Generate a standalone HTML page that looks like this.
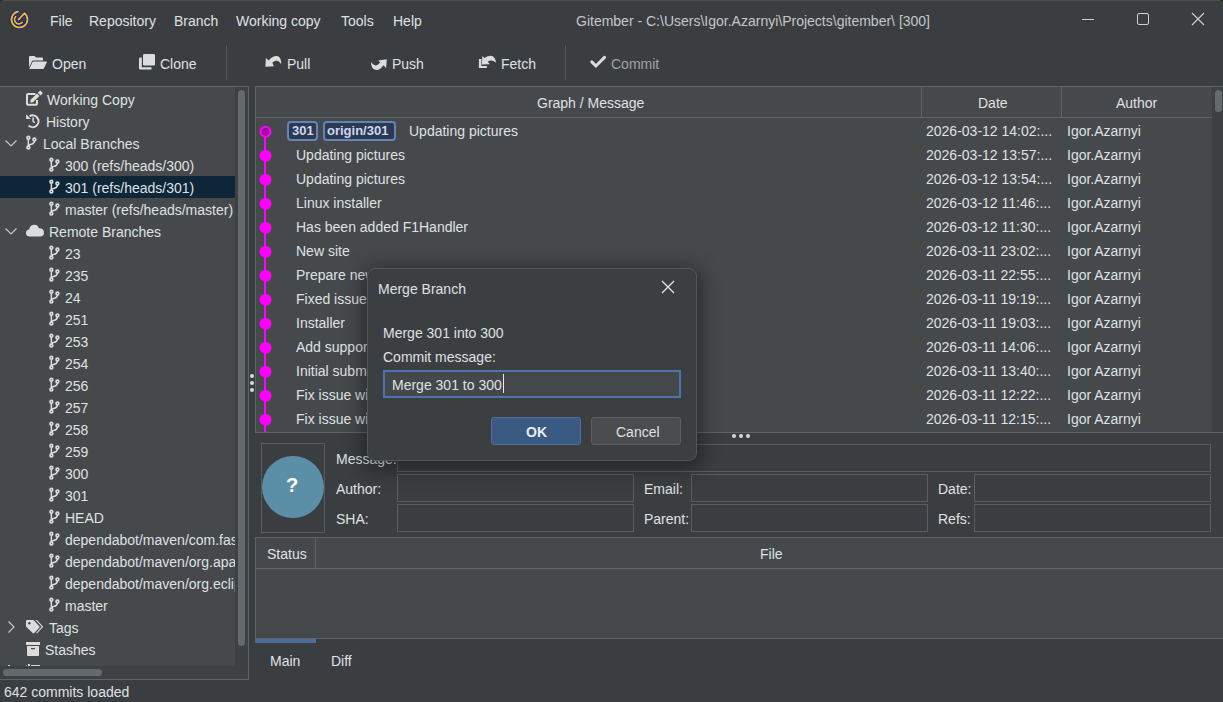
<!DOCTYPE html>
<html><head><meta charset="utf-8"><style>
html,body{margin:0;padding:0;}
body{width:1223px;height:702px;overflow:hidden;position:relative;background:#3b3e41;font-family:"Liberation Sans",sans-serif;font-size:14px;color:#dfe1e3;}
.t{position:absolute;white-space:nowrap;line-height:16px;}
.b{position:absolute;box-sizing:border-box;}
svg{position:absolute;overflow:visible;}
</style></head><body>

<div class="b" style="left:0px;top:0px;width:1223px;height:1px;background:#4b5149;"></div>
<div class="b" style="left:0px;top:0px;width:3px;height:1px;background:#26331f;"></div>
<div class="b" style="left:0px;top:1px;width:1px;height:2px;background:#2f3a2b;"></div>
<div class="b" style="left:1220px;top:0px;width:3px;height:1px;background:#26331f;"></div>
<div class="b" style="left:1222px;top:1px;width:1px;height:2px;background:#2f3a2b;"></div>
<svg style="left:6px;top:6px" width="26" height="26" viewBox="0 0 26 26">
<g fill="none" stroke-linecap="round" stroke-linejoin="round">
<path d="M11.9 5.6 A8 8 0 1 0 18.5 7.2 L12.6 13.6 M9.6 10.7 A4.35 4.35 0 0 0 16.3 16.3" stroke="#1a1ab0" stroke-width="3.4"/>
<path d="M11.9 5.6 A8 8 0 1 0 18.5 7.2 L12.6 13.6 M9.6 10.7 A4.35 4.35 0 0 0 16.3 16.3" stroke="#f7c600" stroke-width="1.7"/>
</g></svg>
<div class="t" style="left:50px;top:13px;">File</div>
<div class="t" style="left:89px;top:13px;">Repository</div>
<div class="t" style="left:174px;top:13px;">Branch</div>
<div class="t" style="left:236px;top:13px;">Working copy</div>
<div class="t" style="left:341px;top:13px;">Tools</div>
<div class="t" style="left:393px;top:13px;">Help</div>
<div class="t" style="left:576px;top:13px;color:#c4c6c8;">Gitember - C:\Users\Igor.Azarnyi\Projects\gitember\ [300]</div>
<div class="b" style="left:1082px;top:19px;width:12px;height:1px;background:#cfd1d3;"></div>
<div class="b" style="left:1137px;top:13px;width:12px;height:12px;border:1px solid #cfd1d3;border-radius:2px;"></div>
<svg style="left:1192px;top:13px" width="12" height="12"><path d="M0 0L12 12M12 0L0 12" stroke="#cfd1d3" stroke-width="1.1"/></svg>
<svg style="left:29px;top:56px" width="18" height="13" viewBox="0 0 18 13">
<path d="M0 1.2 Q0 0 1.2 0 H5.5 L7 1.6 H13 Q14 1.6 14 2.6 V4.5 H4.2 Q3.4 4.5 3 5.3 L0 11.5 Z" fill="#dcdcdc"/>
<path d="M4.3 5.6 H17.6 Q18 5.6 17.8 6.2 L15 12.3 Q14.7 13 14 13 H0.8 Q0.3 13 0.5 12.5 L3.5 6.1 Q3.8 5.6 4.3 5.6Z" fill="#dcdcdc"/>
</svg>
<div class="t" style="left:52px;top:56px;">Open</div>
<svg style="left:139px;top:54px" width="16" height="16" viewBox="0 0 16 16">
<rect x="4" y="0" width="12" height="11.5" rx="1.3" fill="#dcdcdc"/>
<path d="M2.8 3.5 V13.2 H12.5 V15.5 H1.3 Q0 15.5 0 14.2 V4.8 Q0 3.5 1.3 3.5 Z" fill="#dcdcdc"/>
</svg>
<div class="t" style="left:160px;top:56px;">Clone</div>
<div class="b" style="left:226px;top:45px;width:1px;height:35px;background:#55585b;"></div>
<svg style="left:260px;top:50px" width="30" height="25" viewBox="0 0 30 25">
<path d="M5.9 7.9 L8.7 10.5 Q12 5.9 16.5 5.9 Q21.3 6.1 21.2 13.9 Q19 10.4 16.5 10.4 Q14.2 10.5 12.3 12.8 L13.9 16.3 L5.4 16.8 Z" fill="#dcdcdc"/>
</svg>
<div class="t" style="left:287px;top:56px;">Pull</div>
<svg style="left:365px;top:50px" width="30" height="25" viewBox="0 0 30 25">
<path d="M13.2 10.4 L21.8 9.2 L21.1 17.9 L18.4 15.3 Q15.5 20 11.3 20 Q6.2 19.8 5.9 12.1 Q8 15.4 10.5 15.4 Q12.8 15.3 15.2 12.4 Z" fill="#dcdcdc"/>
</svg>
<div class="t" style="left:392px;top:56px;">Push</div>
<svg style="left:473px;top:50px" width="30" height="25" viewBox="0 0 30 25">
<path d="M9.3 6.1 L11.5 8 Q14.5 5.7 17.5 5.7 Q22.5 6 22.9 12.7 Q20.5 10.4 18 10.4 Q16 10.4 14.8 11.8 L16.8 14.3 L9 14.6 Z" fill="#dcdcdc"/>
<path d="M5.9 8.9 H8.4 V16 H13.9 V17.9 H5.9 Z" fill="#dcdcdc"/>
</svg>
<div class="t" style="left:501px;top:56px;">Fetch</div>
<div class="b" style="left:565px;top:45px;width:1px;height:35px;background:#55585b;"></div>
<svg style="left:585px;top:50px" width="30" height="25" viewBox="0 0 30 25">
<path d="M6.8 11.9 L10.9 16 L19.5 7.4" fill="none" stroke="#dcdcdc" stroke-width="3" stroke-linecap="round"/>
</svg>
<div class="t" style="left:611px;top:56px;color:#a0a3a6;">Commit</div>
<div class="b" style="left:0px;top:86px;width:249px;height:594px;border:1px solid #606366;border-left:none;background:#45494b;"></div>
<div class="b" style="left:235px;top:87px;width:13px;height:579px;background:#3e4144;"></div>
<div class="b" style="left:0px;top:666px;width:248px;height:13px;background:#3e4144;"></div>
<div class="b" style="left:238px;top:90px;width:7px;height:556px;background:#646b6e;border-radius:4px;"></div>
<div class="b" style="left:3px;top:669px;width:99px;height:7px;background:#646b6e;border-radius:4px;"></div>
<div class="b" style="left:0px;top:176px;width:235px;height:22px;background:#0e2638;"></div>
<div class="b" style="left:0;top:87px;width:235px;height:579px;overflow:hidden;">
<svg style="left:22px;top:1px" width="24" height="20" viewBox="0 0 24 20">
<path d="M13.4 5.9 H6 Q5 5.9 5 6.9 V15.8 Q5 16.8 6 16.8 H14 Q15 16.8 15 15.8 V12" fill="none" stroke="#dcdcdc" stroke-width="2"/>
<path d="M8.3 14.6 L8.56 11.86 L15.0 5.4 L17.5 7.9 L11.04 14.34 Z" fill="#dcdcdc"/>
<path d="M15.7 4.8 L17.6 2.9 Q18.2 2.3 18.8 2.9 L20.4 4.5 Q21 5.1 20.4 5.7 L18.5 7.6 Z" fill="#dcdcdc"/>
</svg>
<div class="t" style="left:47px;top:5px;">Working Copy</div>
<svg style="left:22px;top:23px" width="24" height="20" viewBox="0 0 24 20">
<path d="M6.6 15.6 A5.9 5.9 0 1 0 7.6 6.2" fill="none" stroke="#dcdcdc" stroke-width="2"/>
<path d="M4.1 4.3 L4.1 9.1 L8.9 9.1 Z" fill="#dcdcdc"/>
<path d="M11.1 7.6 V11.2 L12.6 12.8" fill="none" stroke="#dcdcdc" stroke-width="1.5"/>
</svg>
<div class="t" style="left:46px;top:27px;">History</div>
<svg style="left:5px;top:53px" width="12" height="7"><path d="M0.5 0.5 L6 6 L11.5 0.5" fill="none" stroke="#c9cbcd" stroke-width="1.1"/></svg>
<svg style="left:26px;top:49px" width="12" height="15" viewBox="0 0 12 15">
<g fill="none" stroke="#dcdcdc" stroke-width="1.5">
<circle cx="2.35" cy="1.75" r="1.4" stroke-width="1.7"/>
<circle cx="2.35" cy="11.5" r="1.4" stroke-width="1.7"/>
<circle cx="8.4" cy="3.45" r="1.4" stroke-width="1.7"/>
<path d="M2.35 3.1 V10.1 M8.4 4.8 Q8.4 7.8 4.5 8.6 Q2.6 9 2.35 10.1"/>
</g></svg>
<div class="t" style="left:43px;top:49px;">Local Branches</div>
<svg style="left:49px;top:71px" width="12" height="15" viewBox="0 0 12 15">
<g fill="none" stroke="#dcdcdc" stroke-width="1.5">
<circle cx="2.35" cy="1.75" r="1.4" stroke-width="1.7"/>
<circle cx="2.35" cy="11.5" r="1.4" stroke-width="1.7"/>
<circle cx="8.4" cy="3.45" r="1.4" stroke-width="1.7"/>
<path d="M2.35 3.1 V10.1 M8.4 4.8 Q8.4 7.8 4.5 8.6 Q2.6 9 2.35 10.1"/>
</g></svg>
<div class="t" style="left:65px;top:71px;">300 (refs/heads/300)</div>
<svg style="left:49px;top:93px" width="12" height="15" viewBox="0 0 12 15">
<g fill="none" stroke="#dcdcdc" stroke-width="1.5">
<circle cx="2.35" cy="1.75" r="1.4" stroke-width="1.7"/>
<circle cx="2.35" cy="11.5" r="1.4" stroke-width="1.7"/>
<circle cx="8.4" cy="3.45" r="1.4" stroke-width="1.7"/>
<path d="M2.35 3.1 V10.1 M8.4 4.8 Q8.4 7.8 4.5 8.6 Q2.6 9 2.35 10.1"/>
</g></svg>
<div class="t" style="left:65px;top:93px;">301 (refs/heads/301)</div>
<svg style="left:49px;top:115px" width="12" height="15" viewBox="0 0 12 15">
<g fill="none" stroke="#dcdcdc" stroke-width="1.5">
<circle cx="2.35" cy="1.75" r="1.4" stroke-width="1.7"/>
<circle cx="2.35" cy="11.5" r="1.4" stroke-width="1.7"/>
<circle cx="8.4" cy="3.45" r="1.4" stroke-width="1.7"/>
<path d="M2.35 3.1 V10.1 M8.4 4.8 Q8.4 7.8 4.5 8.6 Q2.6 9 2.35 10.1"/>
</g></svg>
<div class="t" style="left:65px;top:115px;">master (refs/heads/master)</div>
<svg style="left:5px;top:141px" width="12" height="7"><path d="M0.5 0.5 L6 6 L11.5 0.5" fill="none" stroke="#c9cbcd" stroke-width="1.1"/></svg>
<svg style="left:26px;top:137px" width="18" height="13" viewBox="0 0 18 13">
<path d="M4 12.5 Q0 12.5 0 9 Q0 6 3.2 5.6 Q3.6 1.5 7.8 0.8 Q11.6 0.5 13 4.2 Q17.8 4.3 18 8.5 Q18 12.5 14 12.5 Z" fill="#dcdcdc"/>
</svg>
<div class="t" style="left:49px;top:137px;">Remote Branches</div>
<svg style="left:49px;top:159px" width="12" height="15" viewBox="0 0 12 15">
<g fill="none" stroke="#dcdcdc" stroke-width="1.5">
<circle cx="2.35" cy="1.75" r="1.4" stroke-width="1.7"/>
<circle cx="2.35" cy="11.5" r="1.4" stroke-width="1.7"/>
<circle cx="8.4" cy="3.45" r="1.4" stroke-width="1.7"/>
<path d="M2.35 3.1 V10.1 M8.4 4.8 Q8.4 7.8 4.5 8.6 Q2.6 9 2.35 10.1"/>
</g></svg>
<div class="t" style="left:65px;top:159px;">23</div>
<svg style="left:49px;top:181px" width="12" height="15" viewBox="0 0 12 15">
<g fill="none" stroke="#dcdcdc" stroke-width="1.5">
<circle cx="2.35" cy="1.75" r="1.4" stroke-width="1.7"/>
<circle cx="2.35" cy="11.5" r="1.4" stroke-width="1.7"/>
<circle cx="8.4" cy="3.45" r="1.4" stroke-width="1.7"/>
<path d="M2.35 3.1 V10.1 M8.4 4.8 Q8.4 7.8 4.5 8.6 Q2.6 9 2.35 10.1"/>
</g></svg>
<div class="t" style="left:65px;top:181px;">235</div>
<svg style="left:49px;top:203px" width="12" height="15" viewBox="0 0 12 15">
<g fill="none" stroke="#dcdcdc" stroke-width="1.5">
<circle cx="2.35" cy="1.75" r="1.4" stroke-width="1.7"/>
<circle cx="2.35" cy="11.5" r="1.4" stroke-width="1.7"/>
<circle cx="8.4" cy="3.45" r="1.4" stroke-width="1.7"/>
<path d="M2.35 3.1 V10.1 M8.4 4.8 Q8.4 7.8 4.5 8.6 Q2.6 9 2.35 10.1"/>
</g></svg>
<div class="t" style="left:65px;top:203px;">24</div>
<svg style="left:49px;top:225px" width="12" height="15" viewBox="0 0 12 15">
<g fill="none" stroke="#dcdcdc" stroke-width="1.5">
<circle cx="2.35" cy="1.75" r="1.4" stroke-width="1.7"/>
<circle cx="2.35" cy="11.5" r="1.4" stroke-width="1.7"/>
<circle cx="8.4" cy="3.45" r="1.4" stroke-width="1.7"/>
<path d="M2.35 3.1 V10.1 M8.4 4.8 Q8.4 7.8 4.5 8.6 Q2.6 9 2.35 10.1"/>
</g></svg>
<div class="t" style="left:65px;top:225px;">251</div>
<svg style="left:49px;top:247px" width="12" height="15" viewBox="0 0 12 15">
<g fill="none" stroke="#dcdcdc" stroke-width="1.5">
<circle cx="2.35" cy="1.75" r="1.4" stroke-width="1.7"/>
<circle cx="2.35" cy="11.5" r="1.4" stroke-width="1.7"/>
<circle cx="8.4" cy="3.45" r="1.4" stroke-width="1.7"/>
<path d="M2.35 3.1 V10.1 M8.4 4.8 Q8.4 7.8 4.5 8.6 Q2.6 9 2.35 10.1"/>
</g></svg>
<div class="t" style="left:65px;top:247px;">253</div>
<svg style="left:49px;top:269px" width="12" height="15" viewBox="0 0 12 15">
<g fill="none" stroke="#dcdcdc" stroke-width="1.5">
<circle cx="2.35" cy="1.75" r="1.4" stroke-width="1.7"/>
<circle cx="2.35" cy="11.5" r="1.4" stroke-width="1.7"/>
<circle cx="8.4" cy="3.45" r="1.4" stroke-width="1.7"/>
<path d="M2.35 3.1 V10.1 M8.4 4.8 Q8.4 7.8 4.5 8.6 Q2.6 9 2.35 10.1"/>
</g></svg>
<div class="t" style="left:65px;top:269px;">254</div>
<svg style="left:49px;top:291px" width="12" height="15" viewBox="0 0 12 15">
<g fill="none" stroke="#dcdcdc" stroke-width="1.5">
<circle cx="2.35" cy="1.75" r="1.4" stroke-width="1.7"/>
<circle cx="2.35" cy="11.5" r="1.4" stroke-width="1.7"/>
<circle cx="8.4" cy="3.45" r="1.4" stroke-width="1.7"/>
<path d="M2.35 3.1 V10.1 M8.4 4.8 Q8.4 7.8 4.5 8.6 Q2.6 9 2.35 10.1"/>
</g></svg>
<div class="t" style="left:65px;top:291px;">256</div>
<svg style="left:49px;top:313px" width="12" height="15" viewBox="0 0 12 15">
<g fill="none" stroke="#dcdcdc" stroke-width="1.5">
<circle cx="2.35" cy="1.75" r="1.4" stroke-width="1.7"/>
<circle cx="2.35" cy="11.5" r="1.4" stroke-width="1.7"/>
<circle cx="8.4" cy="3.45" r="1.4" stroke-width="1.7"/>
<path d="M2.35 3.1 V10.1 M8.4 4.8 Q8.4 7.8 4.5 8.6 Q2.6 9 2.35 10.1"/>
</g></svg>
<div class="t" style="left:65px;top:313px;">257</div>
<svg style="left:49px;top:335px" width="12" height="15" viewBox="0 0 12 15">
<g fill="none" stroke="#dcdcdc" stroke-width="1.5">
<circle cx="2.35" cy="1.75" r="1.4" stroke-width="1.7"/>
<circle cx="2.35" cy="11.5" r="1.4" stroke-width="1.7"/>
<circle cx="8.4" cy="3.45" r="1.4" stroke-width="1.7"/>
<path d="M2.35 3.1 V10.1 M8.4 4.8 Q8.4 7.8 4.5 8.6 Q2.6 9 2.35 10.1"/>
</g></svg>
<div class="t" style="left:65px;top:335px;">258</div>
<svg style="left:49px;top:357px" width="12" height="15" viewBox="0 0 12 15">
<g fill="none" stroke="#dcdcdc" stroke-width="1.5">
<circle cx="2.35" cy="1.75" r="1.4" stroke-width="1.7"/>
<circle cx="2.35" cy="11.5" r="1.4" stroke-width="1.7"/>
<circle cx="8.4" cy="3.45" r="1.4" stroke-width="1.7"/>
<path d="M2.35 3.1 V10.1 M8.4 4.8 Q8.4 7.8 4.5 8.6 Q2.6 9 2.35 10.1"/>
</g></svg>
<div class="t" style="left:65px;top:357px;">259</div>
<svg style="left:49px;top:379px" width="12" height="15" viewBox="0 0 12 15">
<g fill="none" stroke="#dcdcdc" stroke-width="1.5">
<circle cx="2.35" cy="1.75" r="1.4" stroke-width="1.7"/>
<circle cx="2.35" cy="11.5" r="1.4" stroke-width="1.7"/>
<circle cx="8.4" cy="3.45" r="1.4" stroke-width="1.7"/>
<path d="M2.35 3.1 V10.1 M8.4 4.8 Q8.4 7.8 4.5 8.6 Q2.6 9 2.35 10.1"/>
</g></svg>
<div class="t" style="left:65px;top:379px;">300</div>
<svg style="left:49px;top:401px" width="12" height="15" viewBox="0 0 12 15">
<g fill="none" stroke="#dcdcdc" stroke-width="1.5">
<circle cx="2.35" cy="1.75" r="1.4" stroke-width="1.7"/>
<circle cx="2.35" cy="11.5" r="1.4" stroke-width="1.7"/>
<circle cx="8.4" cy="3.45" r="1.4" stroke-width="1.7"/>
<path d="M2.35 3.1 V10.1 M8.4 4.8 Q8.4 7.8 4.5 8.6 Q2.6 9 2.35 10.1"/>
</g></svg>
<div class="t" style="left:65px;top:401px;">301</div>
<svg style="left:49px;top:423px" width="12" height="15" viewBox="0 0 12 15">
<g fill="none" stroke="#dcdcdc" stroke-width="1.5">
<circle cx="2.35" cy="1.75" r="1.4" stroke-width="1.7"/>
<circle cx="2.35" cy="11.5" r="1.4" stroke-width="1.7"/>
<circle cx="8.4" cy="3.45" r="1.4" stroke-width="1.7"/>
<path d="M2.35 3.1 V10.1 M8.4 4.8 Q8.4 7.8 4.5 8.6 Q2.6 9 2.35 10.1"/>
</g></svg>
<div class="t" style="left:65px;top:423px;">HEAD</div>
<svg style="left:49px;top:445px" width="12" height="15" viewBox="0 0 12 15">
<g fill="none" stroke="#dcdcdc" stroke-width="1.5">
<circle cx="2.35" cy="1.75" r="1.4" stroke-width="1.7"/>
<circle cx="2.35" cy="11.5" r="1.4" stroke-width="1.7"/>
<circle cx="8.4" cy="3.45" r="1.4" stroke-width="1.7"/>
<path d="M2.35 3.1 V10.1 M8.4 4.8 Q8.4 7.8 4.5 8.6 Q2.6 9 2.35 10.1"/>
</g></svg>
<div class="t" style="left:65px;top:445px;">dependabot/maven/com.fas</div>
<svg style="left:49px;top:467px" width="12" height="15" viewBox="0 0 12 15">
<g fill="none" stroke="#dcdcdc" stroke-width="1.5">
<circle cx="2.35" cy="1.75" r="1.4" stroke-width="1.7"/>
<circle cx="2.35" cy="11.5" r="1.4" stroke-width="1.7"/>
<circle cx="8.4" cy="3.45" r="1.4" stroke-width="1.7"/>
<path d="M2.35 3.1 V10.1 M8.4 4.8 Q8.4 7.8 4.5 8.6 Q2.6 9 2.35 10.1"/>
</g></svg>
<div class="t" style="left:65px;top:467px;">dependabot/maven/org.apa</div>
<svg style="left:49px;top:489px" width="12" height="15" viewBox="0 0 12 15">
<g fill="none" stroke="#dcdcdc" stroke-width="1.5">
<circle cx="2.35" cy="1.75" r="1.4" stroke-width="1.7"/>
<circle cx="2.35" cy="11.5" r="1.4" stroke-width="1.7"/>
<circle cx="8.4" cy="3.45" r="1.4" stroke-width="1.7"/>
<path d="M2.35 3.1 V10.1 M8.4 4.8 Q8.4 7.8 4.5 8.6 Q2.6 9 2.35 10.1"/>
</g></svg>
<div class="t" style="left:65px;top:489px;">dependabot/maven/org.eclip</div>
<svg style="left:49px;top:511px" width="12" height="15" viewBox="0 0 12 15">
<g fill="none" stroke="#dcdcdc" stroke-width="1.5">
<circle cx="2.35" cy="1.75" r="1.4" stroke-width="1.7"/>
<circle cx="2.35" cy="11.5" r="1.4" stroke-width="1.7"/>
<circle cx="8.4" cy="3.45" r="1.4" stroke-width="1.7"/>
<path d="M2.35 3.1 V10.1 M8.4 4.8 Q8.4 7.8 4.5 8.6 Q2.6 9 2.35 10.1"/>
</g></svg>
<div class="t" style="left:65px;top:511px;">master</div>
<svg style="left:8px;top:533.5px" width="7" height="12"><path d="M0.5 0.5 L6 6 L0.5 11.5" fill="none" stroke="#c9cbcd" stroke-width="1.1"/></svg>
<svg style="left:26px;top:533px" width="18" height="14" viewBox="0 0 18 14">
<path d="M0 1.2 Q0 0 1.2 0 H7.5 L13.5 6.5 Q14 7 13.5 7.5 L8 13.3 Q7.5 13.8 7 13.3 L0.4 7 Q0 6.6 0 6 Z" fill="#dcdcdc"/>
<circle cx="3.3" cy="3.3" r="1.2" fill="#45494b"/>
<path d="M9.5 0 H11 L17.2 6.8 L11 13.6 L10.2 12.8 L15.7 6.8 Z" fill="#dcdcdc"/>
</svg>
<div class="t" style="left:49px;top:533px;">Tags</div>
<svg style="left:26px;top:555px" width="14" height="14" viewBox="0 0 14 14">
<rect x="0" y="0" width="14" height="3" fill="#dcdcdc"/>
<path d="M1 4 H13 V13 Q13 14 12 14 H2 Q1 14 1 13 Z" fill="#dcdcdc"/>
<rect x="5" y="6" width="4" height="1.2" fill="#45494b"/>
</svg>
<div class="t" style="left:45px;top:555px;">Stashes</div>
<div class="b" style="left:8px;top:578px;width:2px;height:1px;background:#d0d0d0;"></div>
<div class="b" style="left:26px;top:578px;width:1px;height:1px;background:#a0a0a0;"></div>
<div class="b" style="left:28px;top:577px;width:2px;height:2px;background:#d8d8d8;"></div>
<div class="b" style="left:31px;top:578px;width:9px;height:1px;background:#d8d8d8;"></div>
</div>
<div class="t" style="left:4px;top:684px;">642 commits loaded</div>
<div class="b" style="left:255px;top:86px;width:968px;height:347px;border:1px solid #606366;border-right:none;background:#45494b;"></div>
<div class="b" style="left:256px;top:117px;width:956px;height:1px;background:#606366;"></div>
<div class="b" style="left:921px;top:87px;width:1px;height:30px;background:#606366;"></div>
<div class="b" style="left:1061px;top:87px;width:1px;height:30px;background:#606366;"></div>
<div class="b" style="left:1212px;top:87px;width:11px;height:345px;background:#3e4144;"></div>
<div class="b" style="left:1215px;top:90px;width:7px;height:22px;background:#646b6e;border-radius:4px;"></div>
<div class="t" style="left:537px;top:95px;">Graph / Message</div>
<div class="t" style="left:978px;top:95px;">Date</div>
<div class="t" style="left:1116px;top:95px;">Author</div>
<div class="b" style="left:264px;top:131px;width:2px;height:301px;background:#ff00ff;"></div>
<div class="b" style="left:256px;top:118px;width:956px;height:314px;overflow:hidden;">
<svg style="left:0;top:0" width="20" height="24"><circle cx="9.5" cy="13.75" r="5" fill="#a800a8" stroke="#ff00ff" stroke-width="2"/></svg>
<div class="b" style="left:31px;top:3px;width:31px;height:20px;border:2px solid #6384b8;border-radius:4px;background:#2c3950;"></div>
<div class="t" style="left:36px;top:5px;color:#ccd8f2;font-size:13px;font-weight:bold;">301</div>
<div class="b" style="left:67px;top:3px;width:73px;height:20px;border:2px solid #6384b8;border-radius:4px;background:#2c3950;"></div>
<div class="t" style="left:71px;top:5px;color:#ccd8f2;font-size:13px;font-weight:bold;">origin/301</div>
<div class="t" style="left:153px;top:5px;">Updating pictures</div>
<div class="t" style="left:670px;top:5px;">2026-03-12 14:02:...</div>
<div class="t" style="left:811px;top:5px;">Igor.Azarnyi</div>
<svg style="left:0;top:24px" width="20" height="24"><circle cx="9.5" cy="13.75" r="6" fill="#ff00ff"/></svg>
<div class="t" style="left:40px;top:29px;">Updating pictures</div>
<div class="t" style="left:670px;top:29px;">2026-03-12 13:57:...</div>
<div class="t" style="left:811px;top:29px;">Igor.Azarnyi</div>
<svg style="left:0;top:48px" width="20" height="24"><circle cx="9.5" cy="13.75" r="6" fill="#ff00ff"/></svg>
<div class="t" style="left:40px;top:53px;">Updating pictures</div>
<div class="t" style="left:670px;top:53px;">2026-03-12 13:54:...</div>
<div class="t" style="left:811px;top:53px;">Igor.Azarnyi</div>
<svg style="left:0;top:72px" width="20" height="24"><circle cx="9.5" cy="13.75" r="6" fill="#ff00ff"/></svg>
<div class="t" style="left:40px;top:77px;">Linux installer</div>
<div class="t" style="left:670px;top:77px;">2026-03-12 11:46:...</div>
<div class="t" style="left:811px;top:77px;">Igor.Azarnyi</div>
<svg style="left:0;top:96px" width="20" height="24"><circle cx="9.5" cy="13.75" r="6" fill="#ff00ff"/></svg>
<div class="t" style="left:40px;top:101px;">Has been added F1Handler</div>
<div class="t" style="left:670px;top:101px;">2026-03-12 11:30:...</div>
<div class="t" style="left:811px;top:101px;">Igor.Azarnyi</div>
<svg style="left:0;top:120px" width="20" height="24"><circle cx="9.5" cy="13.75" r="6" fill="#ff00ff"/></svg>
<div class="t" style="left:40px;top:125px;">New site</div>
<div class="t" style="left:670px;top:125px;">2026-03-11 23:02:...</div>
<div class="t" style="left:811px;top:125px;">Igor Azarnyi</div>
<svg style="left:0;top:144px" width="20" height="24"><circle cx="9.5" cy="13.75" r="6" fill="#ff00ff"/></svg>
<div class="t" style="left:40px;top:149px;">Prepare new site</div>
<div class="t" style="left:670px;top:149px;">2026-03-11 22:55:...</div>
<div class="t" style="left:811px;top:149px;">Igor Azarnyi</div>
<svg style="left:0;top:168px" width="20" height="24"><circle cx="9.5" cy="13.75" r="6" fill="#ff00ff"/></svg>
<div class="t" style="left:40px;top:173px;">Fixed issue with</div>
<div class="t" style="left:670px;top:173px;">2026-03-11 19:19:...</div>
<div class="t" style="left:811px;top:173px;">Igor Azarnyi</div>
<svg style="left:0;top:192px" width="20" height="24"><circle cx="9.5" cy="13.75" r="6" fill="#ff00ff"/></svg>
<div class="t" style="left:40px;top:197px;">Installer</div>
<div class="t" style="left:670px;top:197px;">2026-03-11 19:03:...</div>
<div class="t" style="left:811px;top:197px;">Igor Azarnyi</div>
<svg style="left:0;top:216px" width="20" height="24"><circle cx="9.5" cy="13.75" r="6" fill="#ff00ff"/></svg>
<div class="t" style="left:40px;top:221px;">Add support</div>
<div class="t" style="left:670px;top:221px;">2026-03-11 14:06:...</div>
<div class="t" style="left:811px;top:221px;">Igor Azarnyi</div>
<svg style="left:0;top:240px" width="20" height="24"><circle cx="9.5" cy="13.75" r="6" fill="#ff00ff"/></svg>
<div class="t" style="left:40px;top:245px;">Initial submit</div>
<div class="t" style="left:670px;top:245px;">2026-03-11 13:40:...</div>
<div class="t" style="left:811px;top:245px;">Igor Azarnyi</div>
<svg style="left:0;top:264px" width="20" height="24"><circle cx="9.5" cy="13.75" r="6" fill="#ff00ff"/></svg>
<div class="t" style="left:40px;top:269px;">Fix issue with</div>
<div class="t" style="left:670px;top:269px;">2026-03-11 12:22:...</div>
<div class="t" style="left:811px;top:269px;">Igor Azarnyi</div>
<svg style="left:0;top:288px" width="20" height="24"><circle cx="9.5" cy="13.75" r="6" fill="#ff00ff"/></svg>
<div class="t" style="left:40px;top:293px;">Fix issue with</div>
<div class="t" style="left:670px;top:293px;">2026-03-11 12:15:...</div>
<div class="t" style="left:811px;top:293px;">Igor Azarnyi</div>
</div>
<div class="b" style="left:250px;top:374px;width:4px;height:4px;background:#d8d8d8;border-radius:50%;"></div>
<div class="b" style="left:250px;top:381px;width:4px;height:4px;background:#d8d8d8;border-radius:50%;"></div>
<div class="b" style="left:250px;top:388px;width:4px;height:4px;background:#d8d8d8;border-radius:50%;"></div>
<div class="b" style="left:732px;top:434px;width:4px;height:4px;background:#d8d8d8;border-radius:50%;"></div>
<div class="b" style="left:739px;top:434px;width:4px;height:4px;background:#d8d8d8;border-radius:50%;"></div>
<div class="b" style="left:746px;top:434px;width:4px;height:4px;background:#d8d8d8;border-radius:50%;"></div>
<div class="b" style="left:261px;top:443px;width:64px;height:90px;border:1px solid #5a5d60;"></div>
<div class="b" style="left:262px;top:456px;width:62px;height:62px;background:#5b8fa8;border-radius:50%;"></div>
<div class="t" style="left:286px;top:477px;color:#ffffff;font-size:20px;font-weight:bold;">?</div>
<div class="t" style="left:336px;top:451px;">Message:</div>
<div class="t" style="left:336px;top:481px;">Author:</div>
<div class="t" style="left:336px;top:511px;">SHA:</div>
<div class="t" style="left:644px;top:481px;">Email:</div>
<div class="t" style="left:644px;top:511px;">Parent:</div>
<div class="t" style="left:938px;top:481px;">Date:</div>
<div class="t" style="left:938px;top:511px;">Refs:</div>
<div class="b" style="left:397px;top:444px;width:814px;height:28px;border:1px solid #5a5d60;"></div>
<div class="b" style="left:397px;top:474px;width:237px;height:28px;border:1px solid #5a5d60;"></div>
<div class="b" style="left:397px;top:504px;width:237px;height:28px;border:1px solid #5a5d60;"></div>
<div class="b" style="left:691px;top:474px;width:237px;height:28px;border:1px solid #5a5d60;"></div>
<div class="b" style="left:691px;top:504px;width:237px;height:28px;border:1px solid #5a5d60;"></div>
<div class="b" style="left:974px;top:474px;width:237px;height:28px;border:1px solid #5a5d60;"></div>
<div class="b" style="left:974px;top:504px;width:237px;height:28px;border:1px solid #5a5d60;"></div>
<div class="b" style="left:255px;top:537px;width:968px;height:102px;border:1px solid #606366;border-right:none;background:#45494b;"></div>
<div class="b" style="left:256px;top:568px;width:967px;height:1px;background:#606366;"></div>
<div class="b" style="left:315px;top:538px;width:1px;height:30px;background:#606366;"></div>
<div class="t" style="left:267px;top:546px;">Status</div>
<div class="t" style="left:760px;top:546px;">File</div>
<div class="b" style="left:255px;top:639px;width:61px;height:4px;background:#4a6d99;"></div>
<div class="t" style="left:270px;top:653px;">Main</div>
<div class="t" style="left:331px;top:653px;">Diff</div>
<div class="b" style="left:367px;top:268px;width:330px;height:193px;background:#3c3f42;border:1px solid #54575a;border-radius:8px;box-shadow:0 4px 18px 6px rgba(0,0,0,0.35);"></div>
<div class="t" style="left:378px;top:281px;">Merge Branch</div>
<svg style="left:662px;top:281px" width="12" height="12"><path d="M0 0L12 12M12 0L0 12" stroke="#e8e8e8" stroke-width="1.3"/></svg>
<div class="t" style="left:383px;top:325px;">Merge 301 into 300</div>
<div class="t" style="left:383px;top:349px;">Commit message:</div>
<div class="b" style="left:383px;top:370px;width:298px;height:28px;border:2px solid #4a76ad;background:#45484b;"></div>
<div class="t" style="left:392px;top:377px;">Merge 301 to 300<span style="display:inline-block;width:1px;height:19px;background:#e8e8e8;vertical-align:top;margin-top:-3px;margin-left:1px;"></span></div>
<div class="b" style="left:491px;top:417px;width:90px;height:28px;background:#3a5a84;border:1px solid #4d709e;border-radius:3px;"></div>
<div class="t" style="left:526px;top:424px;color:#e8ecf2;font-weight:bold;">OK</div>
<div class="b" style="left:591px;top:417px;width:90px;height:28px;background:#4a4c4e;border:1px solid #5c5e60;border-radius:3px;"></div>
<div class="t" style="left:616px;top:424px;">Cancel</div>
</body></html>
